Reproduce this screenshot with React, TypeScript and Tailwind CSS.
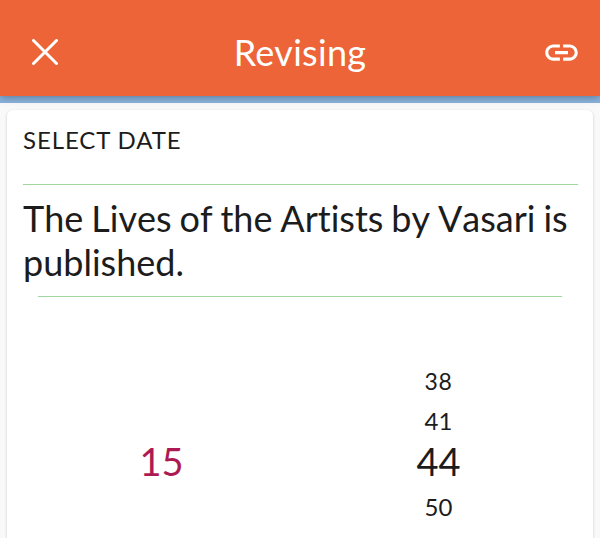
import { MdLink } from "react-icons/md"

const years = [38, 41, 44, 50]

function Header() {
  return (
    <header className="relative z-10 flex h-24 shrink-0 items-center justify-between bg-[#ec6437] pt-2 text-white shadow-[0_1px_8px_rgba(0,0,0,0.35)]">
      <button className="ml-8 w-[26px]">
        <svg viewBox="0 0 26 26" className="size-[26px]" stroke="currentColor" strokeWidth="3" strokeLinecap="round">
          <path d="M1.5 1.5l23 23M24.5 1.5l-23 23" />
        </svg>
      </button>
      <h1 className="text-[36px] leading-[44px] tracking-[0.3px]">Revising</h1>
      <button className="mr-[19px]">
        <MdLink className="size-[39px]" />
      </button>
    </header>
  )
}

export default function App() {
  return (
    <div className="flex h-[538px] w-[600px] flex-col overflow-hidden bg-[#f9f9f9] font-['Lato',sans-serif] text-[#1c1c1c]">
      <Header />
      <div className="h-[7px] shrink-0 bg-[#8ab3dd]" />
      <main className="mx-[7px] mt-[7px] flex-1 rounded-t-[6px] bg-white px-4 shadow-[0_1px_3px_rgba(0,0,0,0.2)]">
        <p className="pt-[9px] text-[24px] leading-[42px] tracking-[0.9px]">SELECT DATE</p>
        <div className="mt-[23px] -mr-px h-px bg-[#a2d69f]" />
        <h2 className="mt-[11px] -mr-2 text-[36px] leading-[44px] [font-kerning:none] [font-variant-ligatures:none] [word-spacing:-1.3px]">
          The Lives of the Artists by Vasari is published.
        </h2>
        <div className="mr-[15px] ml-[15px] mt-[12px] h-px bg-[#a2d69f]" />
        <div className="grid grid-cols-2 text-center">
          <div className="pt-[141px] text-[38px] leading-[46px] text-[#ad1a52]">15</div>
          <div className="flex flex-col pt-[64px]">
            {years.map((year) => (
              <span
                key={year}
                className={
                  year === 44
                    ? "-mt-[3px] mb-[3px] text-[38px] leading-[46px]"
                    : year === 38
                      ? "text-[23px] leading-[40px] tracking-[0.6px]"
                      : "text-[24px] leading-[40px]"
                }
              >
                {year}
              </span>
            ))}
          </div>
        </div>
      </main>
    </div>
  )
}
